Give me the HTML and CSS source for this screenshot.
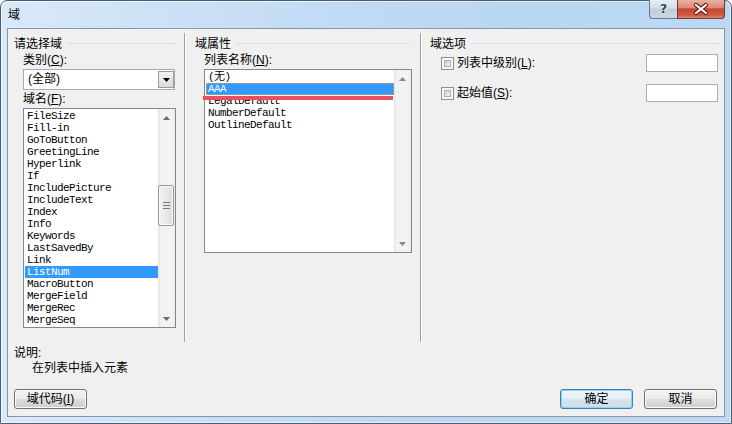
FILE: index.html
```html
<!DOCTYPE html>
<html>
<head>
<meta charset="utf-8">
<link rel="stylesheet" href="styles.css">
</head>
<body>
<div class="window">
  <div class="titlebar">
    <span class="title">域</span>
    <div class="caption">
      <div class="cap-help"><span>?</span></div>
      <div class="cap-close">
        <svg width="46" height="17" viewBox="0 0 46 17">
          <path d="M18 4 L28 12 M28 4 L18 12" stroke="#5a1f18" stroke-width="4.2" stroke-linecap="round"/>
          <path d="M18 4 L28 12 M28 4 L18 12" stroke="#fff" stroke-width="2.2" stroke-linecap="round"/>
        </svg>
      </div>
    </div>
  </div>
  <div class="client">
    <div class="groups">
      <section class="col col-left">
        <div class="gh gh-left">请选择域</div>
        <div class="lbl lbl-left">类别(<u>C</u>):</div>
        <div class="combo">
          <span class="combo-text">(全部)</span>
          <span class="combo-btn">
            <svg width="7" height="4" viewBox="0 0 7 4"><path d="M0 0 H7 L3.5 4 Z" fill="#000"/></svg>
          </span>
        </div>
        <div class="lbl lbl-left lbl-gap">域名(<u>F</u>):</div>
        <div class="listbox list-left">
          <div class="items">
            <div class="item">FileSize</div>
            <div class="item">Fill-in</div>
            <div class="item">GoToButton</div>
            <div class="item">GreetingLine</div>
            <div class="item">Hyperlink</div>
            <div class="item">If</div>
            <div class="item">IncludePicture</div>
            <div class="item">IncludeText</div>
            <div class="item">Index</div>
            <div class="item">Info</div>
            <div class="item">Keywords</div>
            <div class="item">LastSavedBy</div>
            <div class="item">Link</div>
            <div class="item sel">ListNum</div>
            <div class="item">MacroButton</div>
            <div class="item">MergeField</div>
            <div class="item">MergeRec</div>
            <div class="item">MergeSeq</div>
          </div>
          <div class="vscroll">
            <div class="arrow"><svg width="7" height="4" viewBox="0 0 7 4"><path d="M3.5 0 L7 4 H0 Z" fill="#6a6a6a"/></svg></div>
            <div class="track">
              <div class="thumb">
                <svg width="7" height="7" viewBox="0 0 7 7"><path d="M0 .5 H7 M0 3.5 H7 M0 6.5 H7" stroke="#7a7a7a" stroke-width="1"/></svg>
              </div>
            </div>
            <div class="arrow"><svg width="7" height="4" viewBox="0 0 7 4"><path d="M0 0 H7 L3.5 4 Z" fill="#6a6a6a"/></svg></div>
          </div>
        </div>
      </section>
      <div class="sep"></div>
      <section class="col col-mid">
        <div class="gh gh-mid">域属性</div>
        <div class="lbl lbl-mid">列表名称(<u>N</u>):</div>
        <div class="listbox list-mid">
          <div class="items">
            <div class="item">(无)</div>
            <div class="item sel focus">AAA</div>
            <div class="item">LegalDefault</div>
            <div class="item">NumberDefault</div>
            <div class="item">OutlineDefault</div>
          </div>
          <div class="vscroll">
            <div class="arrow"><svg width="7" height="4" viewBox="0 0 7 4"><path d="M3.5 0 L7 4 H0 Z" fill="#8a8a8a"/></svg></div>
            <div class="track"></div>
            <div class="arrow"><svg width="7" height="4" viewBox="0 0 7 4"><path d="M0 0 H7 L3.5 4 Z" fill="#8a8a8a"/></svg></div>
          </div>
          <div class="mark"></div>
        </div>
      </section>
      <div class="sep"></div>
      <section class="col col-right">
        <div class="gh gh-right">域选项</div>
        <div class="opt opt-first">
          <span class="cb"><span class="cb-in"></span></span>
          <span class="opt-label">列表中级别(<u>L</u>):</span>
          <span class="tb"></span>
        </div>
        <div class="opt opt-second">
          <span class="cb"><span class="cb-in"></span></span>
          <span class="opt-label">起始值(<u>S</u>):</span>
          <span class="tb"></span>
        </div>
      </section>
    </div>
    <div class="desc">说明:</div>
    <div class="desc-text">在列表中插入元素</div>
    <div class="buttons">
      <div class="btn">域代码(<u>I</u>)</div>
      <div class="btn btn-default">确定</div>
      <div class="btn btn-cancel">取消</div>
    </div>
  </div>
</div>
</body>
</html>
```

FILE: styles.css
```css
* { box-sizing: border-box; }
html, body { margin: 0; padding: 0; }
body {
  width: 732px;
  height: 424px;
  overflow: hidden;
  background: #fff;
  font-family: "Liberation Sans", "Noto Sans CJK SC", sans-serif;
  font-size: 12px;
  color: #000;
}
u { text-decoration: underline; }

.window {
  width: 732px;
  height: 424px;
  border: 1px solid #4d5c70;
  border-radius: 7px 7px 0 0;
  background: linear-gradient(to right, #d8e9f9 0%, #c6ddf5 35%, #b9d6f3 70%, #bcd8f3 100%);
  padding: 0 6px 6px 6px;
  display: flex;
  flex-direction: column;
  box-shadow: inset 0 0 0 1px rgba(255,255,255,0.6);
}

.titlebar {
  height: 27px;
  display: flex;
  align-items: flex-start;
  flex: none;
}
.title {
  margin-top: 6px;
  padding-left: 1px;
  line-height: 16px;
  font-size: 12px;
}
.caption {
  margin-left: auto;
  margin-top: -1px;
  display: flex;
}
.cap-help {
  width: 28px;
  height: 19px;
  border: 1px solid #6b7789;
  border-top: none;
  border-right: none;
  border-radius: 0 0 0 4px;
  background: linear-gradient(#e6eef6 0%, #d3dee9 45%, #bfcddb 50%, #cad7e4 100%);
  display: flex;
  align-items: center;
  justify-content: center;
}
.cap-help span {
  font-family: "DejaVu Sans", sans-serif;
  font-weight: bold;
  font-size: 13px;
  line-height: 16px;
  color: #3a4350;
  text-shadow: 0 0 2px #fff, 0 0 1px #fff;
}
.cap-close {
  width: 48px;
  height: 19px;
  border: 1px solid #6e3a33;
  border-top: none;
  border-radius: 0 0 4px 0;
  background: linear-gradient(#eab0a0 0%, #dc8a77 42%, #c54631 50%, #cf5b44 85%, #dd8a70 100%);
  display: flex;
  align-items: center;
  justify-content: center;
}

.client {
  flex: 1;
  border: 1px solid #8797ab;
  background: #f0f0f0;
  padding-top: 4px;
  display: flex;
  flex-direction: column;
}

.groups {
  display: grid;
  grid-template-columns: 176px 1px 235px 1px 303px;
  height: 309px;
  flex: none;
}
.sep {
  background: #a0a0a0;
  box-shadow: 1px 0 0 #ffffff;
}
.col {
  display: flex;
  flex-direction: column;
  min-width: 0;
}

.gh {
  display: flex;
  align-items: center;
  height: 16px;
  line-height: 16px;
  margin-top: 3px;
}
.gh::after {
  content: "";
  flex: 1;
  height: 1px;
  background: #d5dfe5;
  margin-left: 5px;
  margin-top: -1px;
}
.gh-left { padding-left: 6px; padding-right: 9px; }
.gh-mid { padding-left: 10px; padding-right: 10px; }
.gh-right { padding-left: 9px; padding-right: 5px; }

.lbl {
  line-height: 14px;
  height: 14px;
  margin-top: 1px;
}
.lbl-left { padding-left: 15px; }
.lbl-gap { margin-top: 2px; }
.lbl-mid { padding-left: 19px; }

.combo {
  margin: 2px 0 0 15px;
  width: 152px;
  height: 21px;
  border: 1px solid #a7abb0;
  background: #fff;
  display: flex;
  align-items: flex-start;
}
.combo-text {
  padding-left: 4px;
  line-height: 19px;
}
.combo-btn {
  margin: 1px 0 0 auto;
  width: 16px;
  height: 17px;
  border: 1px solid #9a9a9a;
  background: linear-gradient(#f2f2f2, #dcdcdc);
  display: flex;
  align-items: center;
  justify-content: center;
}

.listbox {
  position: relative;
  display: flex;
  border: 1px solid #828790;
  background: #fff;
  margin-top: 2px;
}
.list-left { margin-left: 15px; width: 153px; height: 220px; }
.list-mid { margin-left: 19px; width: 208px; height: 184px; }

.items {
  flex: 1;
  min-width: 0;
  padding: 1px 0 0 1px;
  overflow: hidden;
  font-family: "Liberation Mono", "Noto Sans CJK SC", monospace;
  font-size: 11px;
  letter-spacing: -0.6px;
  line-height: 12px;
}
.item {
  height: 12px;
  padding-left: 2px;
  white-space: nowrap;
}
.item.sel {
  background: #3399ff;
  color: #fff;
}
.item.focus {
  outline: 1px dotted #e0a050;
  outline-offset: -1px;
}

.vscroll {
  width: 17px;
  flex: none;
  display: flex;
  flex-direction: column;
  background: linear-gradient(to right, #e3e3e3 0%, #f2f2f2 15%, #f4f4f4 85%, #e9e9e9 100%);
}
.arrow {
  height: 17px;
  flex: none;
  display: flex;
  align-items: center;
  justify-content: center;
}
.track { flex: 1; }
.thumb {
  margin: 59px 1px 0 0;
  height: 41px;
  border: 1px solid #979797;
  border-radius: 2px;
  background: linear-gradient(to right, #f3f3f3 0%, #e9e9e9 50%, #dcdcdc 100%);
  box-shadow: inset 0 0 0 1px #fbfbfb;
  display: flex;
  align-items: center;
  justify-content: center;
}

.mark {
  position: absolute;
  left: -2px;
  top: 26px;
  width: 190px;
  height: 4px;
  background: #e8505e;
}

.opt {
  display: flex;
  align-items: center;
  height: 18px;
  padding-left: 20px;
  padding-right: 6px;
}
.opt-first { margin-top: 2px; }
.opt-second { margin-top: 12px; }
.cb {
  width: 13px;
  height: 13px;
  border: 1px solid #8e8f8f;
  background: #f7f7f7;
  padding: 2px;
  display: block;
  flex: none;
}
.cb-in {
  display: block;
  width: 100%;
  height: 100%;
  border: 1px solid #aeb2b8;
  background: linear-gradient(135deg, #cdd0d5, #eff0f2);
}
.opt-label {
  margin-left: 3px;
  line-height: 14px;
}
.tb {
  margin-left: auto;
  width: 72px;
  height: 18px;
  border: 1px solid #abadb3;
  background: #fff;
}

.desc {
  margin-top: 4px;
  padding-left: 6px;
  line-height: 14px;
  height: 14px;
}
.desc-text {
  margin-top: 1px;
  padding-left: 24px;
  line-height: 14px;
  height: 14px;
}

.buttons {
  margin-top: 14px;
  display: flex;
  padding: 0 7px 0 6px;
}
.btn {
  width: 73px;
  height: 20px;
  border: 1px solid #707070;
  border-radius: 3px;
  background: linear-gradient(#f2f2f2 0%, #ebebeb 48%, #dddddd 52%, #cfcfcf 100%);
  box-shadow: inset 0 0 0 1px #fbfbfb;
  display: flex;
  align-items: center;
  justify-content: center;
  line-height: 16px;
}
.btn-default {
  margin-left: auto;
  border-color: #3c7fb1;
  background: linear-gradient(#f0f6fa 0%, #e4eef5 48%, #d6e3ec 52%, #cddde8 100%);
  box-shadow: inset 0 0 0 1px #8fd3f4;
}
.btn-cancel { margin-left: 11px; }
```
